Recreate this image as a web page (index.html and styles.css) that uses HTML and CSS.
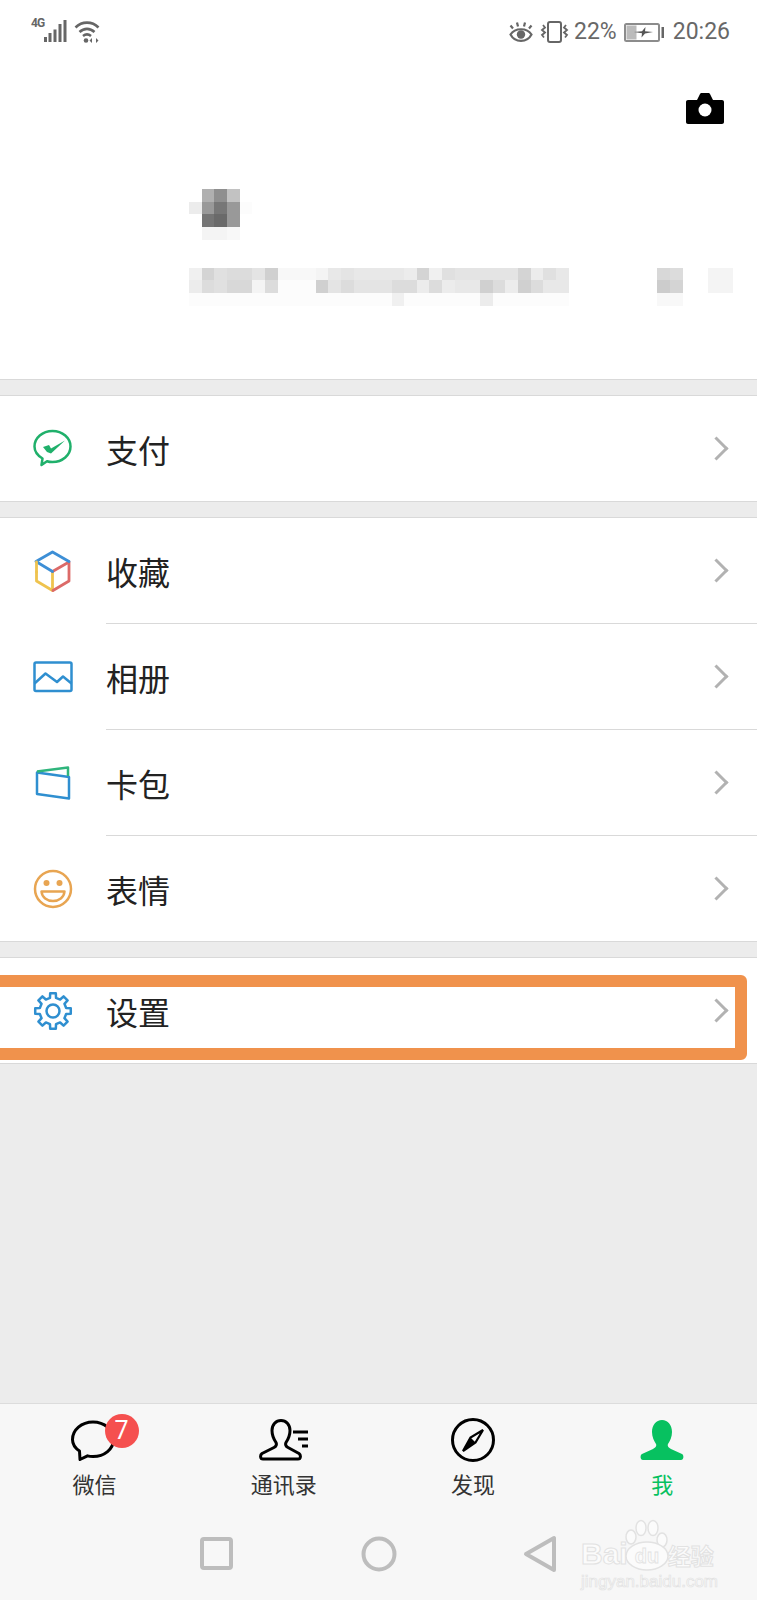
FILE: index.html
```html
<!DOCTYPE html>
<html lang="zh-CN">
<head>
<meta charset="utf-8">
<title>我</title>
<link rel="stylesheet" href="styles.css">
</head>
<body>
<div class="page">

  <!-- HEADER -->
  <header class="profile">
    <div class="status">
      <div class="status-left">
        <span class="net">4G</span>
        <svg class="ic-signal" width="24" height="24" viewBox="0 0 24 24"><g fill="#666"><rect x="1" y="17" width="3" height="5"/><rect x="5.5" y="13" width="3" height="9"/><rect x="10.5" y="9.500" width="3" height="12.5"/><rect x="15.500" y="4" width="3" height="18"/><rect x="20.500" y="0" width="3" height="22"/></g></svg>
        <svg class="ic-wifi" width="27" height="24" viewBox="0 0 27 24"><g fill="none" stroke="#666" stroke-width="2.600"><path d="M1.500 7.500C8 1 18 1 24.500 7.500"/><path d="M5.500 12C10 7.800 16 7.800 20.500 12"/><path d="M9 16C11.500 14 14.500 14 17 16"/></g><circle cx="12" cy="20.500" r="2.300" fill="#666"/><path d="M18 18v5l-2.500-2.500zM22 18v5l2.500-2.500z" fill="#666"/></svg>
      </div>
      <div class="status-right">
        <svg class="ic-eye" width="24" height="21" viewBox="0 0 24 21"><g fill="none" stroke="#666" stroke-width="2.200"><path d="M1.500 12.500C6 5.500 18 5.500 22.500 12.500C18 21 6 21 1.500 12.500z"/><path d="M4 6.500L1.500 3.500M9 4.500L8 .5M15 4.500L16 .5M20 6.500L22.500 3.500"/></g><circle cx="12" cy="12.500" r="4.200" fill="#666"/></svg>
        <svg class="ic-vib" width="29" height="22" viewBox="0 0 29 22"><rect x="8" y="1" width="13" height="20" rx="2" fill="none" stroke="#666" stroke-width="2"/><g fill="none" stroke="#666" stroke-width="1.800"><path d="M3 4l2 2.500l-3 2.500l3 2.500l-3 2.500l2 2.500"/><path d="M26 4l-2 2.500l3 2.500l-3 2.500l3 2.500l-2 2.500"/></g></svg>
        <span class="st-text pct">22%</span>
        <svg class="ic-batt" width="41" height="19" viewBox="0 0 41 19"><rect x="1" y="1" width="34" height="17" rx="1.500" fill="#fff" stroke="#8c8c8c" stroke-width="2"/><rect x="2.500" y="2.500" width="10" height="14" fill="#bbb"/><path d="M10 9l8-.8l3.500-4.200l-.5 4.200l8 .8l-8 1.400l-3.500 4l.5-4.200z" fill="#555"/><rect x="37.500" y="4" width="2.500" height="11" fill="#666"/></svg>
        <span class="st-text time">20:26</span>
      </div>
    </div>

    <div class="camera-row">
      <svg width="38" height="31" viewBox="0 0 38 31"><path d="M2 7h9l3-6c.3-.6.8-1 1.500-1h7c.7 0 1.200.4 1.500 1l3 6h9c1.100 0 2 .9 2 2v20c0 1.100-.9 2-2 2H2c-1.100 0-2-.9-2-2V9c0-1.100.9-2 2-2z" fill="#000"/><circle cx="19" cy="17" r="6.500" fill="#fff"/></svg>
    </div>

    <!-- name and id are pixelated in the shot -->
    <div class="mosaic mosaic-name">
      <div class="px-row"><i></i><i class="c-b0"></i><i class="c-8f"></i><i class="c-c2"></i></div>
      <div class="px-row"><i class="c-ec"></i><i class="c-99"></i><i class="c-77"></i><i class="c-99"></i><i class="c-fc"></i></div>
      <div class="px-row"><i></i><i class="c-75"></i><i class="c-6a"></i><i class="c-99"></i></div>
      <div class="px-row"><i></i><i class="c-f4"></i><i class="c-f4"></i><i class="c-f8"></i></div>
    </div>
    <div class="mosaic mosaic-id">
      <div class="px-row"><i class="c-f0"></i><i class="c-d4"></i><i class="c-e0"></i><i class="c-dc"></i><i class="c-dc"></i><i class="c-e4"></i><i class="c-d0"></i><i class="c-f8"></i><i class="c-f8"></i><i class="c-f8"></i><i class="c-f4"></i><i class="c-e8"></i><i class="c-e4"></i><i class="c-e8"></i><i class="c-e8"></i><i class="c-e8"></i><i class="c-e8"></i><i class="c-ec"></i><i class="c-d4"></i><i class="c-f0"></i><i class="c-e0"></i><i class="c-e4"></i><i class="c-e4"></i><i class="c-e4"></i><i class="c-e4"></i><i class="c-e4"></i><i class="c-d4"></i><i class="c-ec"></i><i class="c-e0"></i><i class="c-e8"></i><i class="px-gap"></i><i class="c-d8"></i><i class="c-dc"></i><i class="px-gap-sm"></i><i class="c-f4"></i><i class="c-f4"></i></div>
      <div class="px-row"><i class="c-ec"></i><i class="c-dc"></i><i class="c-e0"></i><i class="c-d8"></i><i class="c-d8"></i><i class="c-f4"></i><i class="c-dc"></i><i class="c-fc"></i><i class="c-fc"></i><i class="c-fc"></i><i class="c-d0"></i><i class="c-e4"></i><i class="c-dc"></i><i class="c-e4"></i><i class="c-e4"></i><i class="c-e4"></i><i class="c-dc"></i><i class="c-dc"></i><i class="c-ec"></i><i class="c-dc"></i><i class="c-ec"></i><i class="c-e8"></i><i class="c-e8"></i><i class="c-d0"></i><i class="c-dc"></i><i class="c-ec"></i><i class="c-d0"></i><i class="c-dc"></i><i class="c-e8"></i><i class="c-e8"></i><i class="px-gap"></i><i class="c-cc"></i><i class="c-d4"></i><i class="px-gap-sm"></i><i class="c-f4"></i><i class="c-f4"></i></div>
      <div class="px-row"><i class="c-fc"></i><i class="c-fc"></i><i class="c-fc"></i><i class="c-fc"></i><i class="c-fc"></i><i class="c-fc"></i><i class="c-fc"></i><i class="c-fc"></i><i class="c-fc"></i><i class="c-fc"></i><i class="c-fc"></i><i class="c-fc"></i><i class="c-fc"></i><i class="c-fc"></i><i class="c-fc"></i><i class="c-fc"></i><i class="c-f0"></i><i class="c-fc"></i><i class="c-fc"></i><i class="c-fc"></i><i class="c-fc"></i><i class="c-fc"></i><i class="c-fc"></i><i class="c-ec"></i><i class="c-fc"></i><i class="c-fc"></i><i class="c-fc"></i><i class="c-fc"></i><i class="c-fc"></i><i class="c-fc"></i><i class="px-gap"></i><i class="c-f8"></i><i class="c-f8"></i></div>
    </div>
  </header>

  <!-- MENU SECTION -->
  <section class="group">
    <div class="row">
      <div class="row-icon">
        <svg width="40" height="40" viewBox="0 0 40 40"><g fill="none" stroke="#20b06b" stroke-width="2.500" stroke-linejoin="round"><path d="M9.500 29.500C4.500 26.500 1.500 22.500 1.500 17.500C1.500 9 9.500 2 19.500 2S37.500 9 37.500 17.500S29.500 33 19.500 33C17.500 33 15.500 32.700 14 32.200L8.500 36z"/></g><path d="M10 18l6-2l2 3.500L32 11.500L18 24.500l-4-1.500z" fill="#20b06b"/></svg>
      </div>
      <div class="row-body"><span class="row-label">支付</span><span class="chev"></span></div>
    </div>
  </section>

  <section class="group">
    <div class="row">
      <div class="row-icon">
        <svg width="40" height="42" viewBox="0 0 40 42"><g fill="none" stroke-width="2.800" stroke-linecap="round" stroke-linejoin="round"><path d="M3.500 22V31L19.500 40.500V22" stroke="#efc34e"/><path d="M36 12V31L20 40.500M36 12L19.500 21.500" stroke="#dc6a68"/><path d="M3 11.500L19.500 2L36 11.500M3 11.500L19.500 21.500" stroke="#3d8fd6"/><path d="M3.500 12V22" stroke="#efc34e"/></g></svg>
      </div>
      <div class="row-body"><span class="row-label">收藏</span><span class="chev"></span></div>
    </div>
    <div class="row">
      <div class="row-icon">
        <svg width="40" height="32" viewBox="0 0 40 32"><g fill="none" stroke="#2f8fd0" stroke-width="2.500" stroke-linejoin="round"><rect x="1.500" y="1.500" width="37" height="28.500" rx="1.500"/><path d="M1.500 22.500L12.500 12.500L24 21L30 15.500L38.500 22.500"/></g></svg>
      </div>
      <div class="row-body"><span class="row-label">相册</span><span class="chev"></span></div>
    </div>
    <div class="row">
      <div class="row-icon">
        <svg width="40" height="34" viewBox="0 0 40 34"><path d="M4 6.500L36 11V32.500L4 28z" fill="none" stroke="#2f8fd0" stroke-width="2.500" stroke-linejoin="round"/><path d="M4 5.500L35 1.500V10" fill="none" stroke="#2fb57c" stroke-width="2.500" stroke-linejoin="round"/></svg>
      </div>
      <div class="row-body"><span class="row-label">卡包</span><span class="chev"></span></div>
    </div>
    <div class="row">
      <div class="row-icon">
        <svg width="40" height="40" viewBox="0 0 40 40"><circle cx="20" cy="20" r="18" fill="none" stroke="#e8a552" stroke-width="2.500"/><circle cx="13.500" cy="14" r="3" fill="#e8a552"/><circle cx="26.500" cy="14" r="3" fill="#e8a552"/><path d="M8.500 22.500H31.500C31 28.500 26 32 20 32S9 28.500 8.500 22.500z" fill="none" stroke="#e8a552" stroke-width="2.500" stroke-linejoin="round"/></svg>
      </div>
      <div class="row-body"><span class="row-label">表情</span><span class="chev"></span></div>
    </div>
  </section>

  <section class="group group-mark">
    <div class="row">
      <div class="row-icon">
        <svg width="40" height="40" viewBox="0 0 40 40"><g fill="none" stroke="#2f8fd0" stroke-width="2.500" stroke-linejoin="round"><path d="M16.960 6.850L17.180 2.220H22.820L23.040 6.850L27.150 8.550L30.580 5.440L34.560 9.420L31.450 12.850L33.150 16.960L37.780 17.180V22.820L33.150 23.040L31.450 27.150L34.560 30.580L30.580 34.560L27.150 31.450L23.040 33.150L22.820 37.780H17.180L16.960 33.150L12.850 31.450L9.420 34.560L5.440 30.580L8.550 27.150L6.850 23.040L2.220 22.820V17.180L6.850 16.960L8.550 12.850L5.440 9.420L9.420 5.440L12.850 8.550z"/><circle cx="20" cy="20" r="6.500"/></g></svg>
      </div>
      <div class="row-body"><span class="row-label">设置</span><span class="chev"></span></div>
    </div>
    <div class="mark"></div>
  </section>

  <div class="fill"></div>

  <!-- TAB BAR -->
  <footer class="bottom">
    <nav class="tabs">
      <div class="tab">
        <div class="tab-icon">
          <svg width="48" height="44" viewBox="0 0 48 44"><path d="M8.500 33C4 30 1.500 26 1.500 21.500C1.500 12 10.500 4 22 4S42.500 12 42.500 21.500S33.500 38.500 22 38.500C20 38.500 18 38.300 16.500 37.800L9 41.500z" fill="none" stroke="#000" stroke-width="3" stroke-linejoin="round"/></svg>
          <span class="badge">7</span>
        </div>
        <span class="tab-label">微信</span>
      </div>
      <div class="tab">
        <div class="tab-icon">
          <svg width="50" height="42" viewBox="0 0 50 42"><path d="M22 1.500c-5 0-9 4-9 10c0 5 2 9 4 12c1 2 0 4-2 5L3 34.500c-2 1.500-2 5.500 1 5.500H39c3 0 3-4 1-5.500L29 28.500c-2-1-3-3-2-5c2-3 4-7 4-12c0-6-4-10-9-10z" fill="none" stroke="#000" stroke-width="3" stroke-linejoin="round"/><path d="M34 13H49M39 20H49M43 27H49" fill="none" stroke="#000" stroke-width="3"/></svg>
        </div>
        <span class="tab-label">通讯录</span>
      </div>
      <div class="tab">
        <div class="tab-icon">
          <svg width="44" height="44" viewBox="0 0 44 44"><circle cx="22" cy="22" r="20.500" fill="none" stroke="#000" stroke-width="3"/><path d="M32 12L24.500 24.500L12 33L19.500 19.500z" fill="none" stroke="#000" stroke-width="2.200"/><path d="M12 33L19.500 19.500L24.500 24.500z" fill="#000"/></svg>
        </div>
        <span class="tab-label">发现</span>
      </div>
      <div class="tab tab-on">
        <div class="tab-icon">
          <svg width="44" height="42" viewBox="0 0 44 42"><path d="M22 1c-6 0-10 5-10 12c0 5 2 9 4 12c1 2-1 4-3 5L2 35c-2 1-2 6 1 6H41c3 0 3-5 1-6L31 30c-2-1-4-3-3-5c2-3 4-7 4-12c0-7-4-12-10-12z" fill="#07c160"/></svg>
        </div>
        <span class="tab-label">我</span>
      </div>
    </nav>

    <div class="sysnav">
      <svg width="40" height="40" viewBox="0 0 40 40"><rect x="5" y="5" width="29" height="29" rx="2" fill="none" stroke="#bdbdbd" stroke-width="4"/></svg>
      <svg width="40" height="40" viewBox="0 0 40 40"><circle cx="20" cy="20" r="15.500" fill="none" stroke="#bdbdbd" stroke-width="4"/></svg>
      <svg width="40" height="40" viewBox="0 0 40 40"><path d="M5 20L33 4V36z" fill="none" stroke="#bdbdbd" stroke-width="4" stroke-linejoin="round"/></svg>
    </div>

    <div class="wm">
      <div class="wm-top">
        <span class="wm-bai">Bai</span>
        <svg class="wm-paw" width="46" height="52" viewBox="0 0 46 52"><g fill="#fbfbfb" stroke="#e2e2e2" stroke-width="1.500"><ellipse cx="6" cy="18" rx="5" ry="7"/><ellipse cx="16" cy="9" rx="5" ry="7.500"/><ellipse cx="28" cy="9" rx="5" ry="7.500"/><ellipse cx="37" cy="21" rx="5" ry="7"/><ellipse cx="22" cy="37" rx="21" ry="14"/></g><text x="22" y="44" text-anchor="middle" class="wm-du">du</text></svg>
        <span class="wm-cn">经验</span>
      </div>
      <div class="wm-url">jingyan.baidu.com</div>
    </div>
  </footer>

</div>
</body>
</html>
```

FILE: styles.css
```css
* {
    box-sizing: border-box;
}

html, body {
    margin: 0;
    padding: 0;
}

body {
    width: 757px;
    height: 1600px;
    overflow: hidden;
    font-family: "Noto Sans CJK SC", "Noto Sans", sans-serif;
    color: #222;
}

.page {
    display: flex;
    flex-direction: column;
    height: 1600px;
    background-color: #ececec;
}

/* header + status bar */
.profile {
    height: 380px;
    background-color: #fff;
    border-bottom: 1px solid #d9d9d9;
}

.status {
    display: flex;
    justify-content: space-between;
    align-items: center;
    height: 64px;
    padding: 0 27px 0 31px;
}

.status-left, .status-right {
    display: flex;
    align-items: center;
}

.net {
    align-self: flex-start;
    width: 12px;
    margin-top: -4px;
    font-family: Roboto, sans-serif;
    font-size: 12px;
    font-weight: 700;
    line-height: 14px;
    letter-spacing: -1px;
    color: #666;
}

.ic-wifi {
    margin-left: 7px;
}

.ic-vib {
    margin-left: 7px;
}

.st-text {
    font-family: Roboto, sans-serif;
    font-size: 23px;
    line-height: 28px;
    color: #686868;
}

.pct {
    margin-left: 5px;
}

.ic-batt {
    margin-left: 7px;
}

.time {
    margin-left: 8px;
}

.camera-row {
    display: flex;
    justify-content: flex-end;
    height: 31px;
    margin-top: 29px;
    padding-right: 33px;
}

/* pixelated name / id */
.mosaic {
    padding-left: 189px;
}

.mosaic-name {
    margin-top: 65px;
}

.mosaic-id {
    margin-top: 28px;
}

.px-row {
    display: flex;
    height: 12.670px;
}

.px-row i {
    display: block;
    flex: none;
    width: 12.670px;
}

.px-row .px-gap {
    width: 88.700px;
}

.px-row .px-gap-sm {
    width: 25.340px;
}

.c-6a { background-color: #6a6a6a; }
.c-75 { background-color: #757575; }
.c-77 { background-color: #777; }
.c-8f { background-color: #8f8f8f; }
.c-99 { background-color: #999; }
.c-b0 { background-color: #b0b0b0; }
.c-c2 { background-color: #c2c2c2; }
.c-cc { background-color: #ccc; }
.c-d0 { background-color: #d0d0d0; }
.c-d4 { background-color: #d4d4d4; }
.c-d8 { background-color: #d8d8d8; }
.c-dc { background-color: #dcdcdc; }
.c-e0 { background-color: #e0e0e0; }
.c-e4 { background-color: #e4e4e4; }
.c-e8 { background-color: #e8e8e8; }
.c-ec { background-color: #ececec; }
.c-f0 { background-color: #f0f0f0; }
.c-f4 { background-color: #f4f4f4; }
.c-f8 { background-color: #f8f8f8; }
.c-fc { background-color: #fcfcfc; }

/* menu */
.group {
    position: relative;
    margin-top: 15px;
    background-color: #fff;
    border-top: 1px solid #d9d9d9;
    border-bottom: 1px solid #d9d9d9;
}

.row {
    display: flex;
    height: 105px;
}

.row + .row {
    height: 106px;
}

.row + .row .row-body {
    border-top: 1px solid #d9d9d9;
}

.row-icon {
    display: flex;
    justify-content: center;
    align-items: center;
    flex: none;
    width: 106px;
    padding-top: 1px;
}

.row + .row .row-icon {
    padding-top: 2px;
}

.row-body {
    display: flex;
    flex: 1;
    justify-content: space-between;
    align-items: center;
    padding-right: 32px;
}

.row-label {
    font-size: 32px;
    line-height: 44px;
    color: #222;
}

.group-mark .row-label {
    padding-top: 1px;
}

.chev {
    width: 17px;
    height: 17px;
    border-top: 3px solid #b2b2b2;
    border-right: 3px solid #b2b2b2;
    transform: rotate(45deg);
}

/* hand-drawn highlight over the settings row */
.mark {
    position: absolute;
    top: 17px;
    left: -20px;
    width: 767px;
    height: 85px;
    border: 12.500px solid #f0924c;
    border-radius: 6px;
}

.fill {
    flex: 1;
}

/* bottom */
.bottom {
    position: relative;
    height: 197px;
    background-color: #f7f7f7;
    border-top: 1px solid #dcdcdc;
}

.tabs {
    display: grid;
    grid-template-columns: repeat(4, 1fr);
    padding-top: 13px;
}

.tab {
    display: flex;
    flex-direction: column;
    align-items: center;
}

.tab-icon {
    position: relative;
    display: flex;
    justify-content: center;
    align-items: center;
    height: 46px;
}

.tab-label {
    margin-top: 5px;
    font-size: 22px;
    line-height: 30px;
    color: #333;
}

.tab-on .tab-label {
    color: #07c160;
}

.badge {
    position: absolute;
    top: -3px;
    left: 34px;
    width: 34px;
    height: 34px;
    border-radius: 50%;
    background-color: #f5504f;
    color: #fff;
    font-family: Roboto, sans-serif;
    font-size: 25px;
    line-height: 34px;
    text-align: center;
}

.sysnav {
    display: flex;
    justify-content: center;
    gap: 122px;
    margin-top: 36px;
}

/* baidu watermark */
.wm {
    position: absolute;
    top: 115px;
    left: 581px;
    width: 140px;
    color: #fbfbfb;
}

.wm-top {
    display: flex;
    align-items: flex-end;
    height: 52px;
}

.wm-bai {
    font-family: "Liberation Sans", sans-serif;
    font-size: 30px;
    font-weight: 700;
    line-height: 34px;
    -webkit-text-stroke: 1px #e2e2e2;
}

.wm-paw {
    flex: none;
    margin-left: -3px;
}

.wm-du {
    font-family: "Liberation Sans", sans-serif;
    font-size: 20px;
    font-weight: 700;
    fill: #fbfbfb;
    stroke: #e2e2e2;
    stroke-width: .8px;
}

.wm-cn {
    margin-left: -3px;
    font-size: 23px;
    font-weight: 700;
    line-height: 32px;
    -webkit-text-stroke: 1px #e2e2e2;
}

.wm-url {
    margin-top: 1px;
    font-family: "Liberation Sans", sans-serif;
    font-size: 17px;
    line-height: 20px;
    -webkit-text-stroke: .7px #e2e2e2;
}
```
